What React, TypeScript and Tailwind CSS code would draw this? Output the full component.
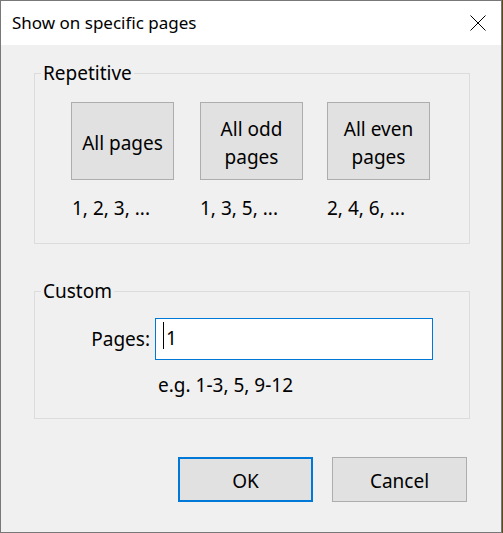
import React from "react";

const font = { fontFamily: '"Noto Sans", "Segoe UI", sans-serif' };

export default function App() {
  return (
    <div className="w-[503px] h-[533px] bg-[#5b4a1e] flex" style={font}>
      <div className="w-[502px] h-[533px] border border-[#787878] flex flex-col bg-[#f0f0f0] text-black">
        {/* Title bar */}
        <div className="h-[44px] bg-white flex items-center justify-between pl-[11px] pr-[15px] shrink-0">
          <span className="text-[17px] leading-[22px]">Show on specific pages</span>
          <svg width="16" height="16" viewBox="0 0 16 16" className="block">
            <path d="M0.5 0.5 L15.5 15.5 M15.5 0.5 L0.5 15.5" stroke="#000" strokeWidth="1" fill="none" />
          </svg>
        </div>

        {/* Body */}
        <div className="flex-1 flex flex-col pl-[33px] text-[19px] leading-[22px]">
          <fieldset className="w-[436px] mt-[17px] border border-[#dcdcdc] pt-[18px] pb-[24px]">
            <legend className="ml-[6px] px-[2px] leading-[22px]">Repetitive</legend>
            <div className="flex pl-[36px]">
              <div className="flex flex-col items-start">
                <div className="w-[103px] h-[78px] pt-[4px] bg-[#e1e1e1] border border-[#adadad] flex items-center justify-center text-center leading-[28px]">
                  All pages
                </div>
                <div className="mt-[17px] pl-[1px]">1, 2, 3, ...</div>
              </div>
              <div className="flex flex-col items-start ml-[26px]">
                <div className="w-[103px] h-[78px] pt-[4px] bg-[#e1e1e1] border border-[#adadad] flex items-center justify-center text-center leading-[28px]">
                  All odd
                  <br />
                  pages
                </div>
                <div className="mt-[17px]">1, 3, 5, ...</div>
              </div>
              <div className="flex flex-col items-start ml-[24px]">
                <div className="w-[103px] h-[78px] pt-[4px] bg-[#e1e1e1] border border-[#adadad] flex items-center justify-center text-center leading-[28px]">
                  All even
                  <br />
                  pages
                </div>
                <div className="mt-[17px]">2, 4, 6, ...</div>
              </div>
            </div>
          </fieldset>

          <fieldset className="w-[436px] mt-[36px] border border-[#dcdcdc] pt-[16px] pb-[22px]">
            <legend className="ml-[6px] px-[2px] leading-[22px]">Custom</legend>
            <div className="flex items-center">
              <div className="w-[115px] text-right">Pages:</div>
              <div className="ml-[5px] w-[278px] h-[42px] bg-white border border-[#0078d7] flex items-center pl-[7px]">
                <span className="w-px h-[27px] bg-black mb-[7px]" />
                <span className="ml-[2px] mb-[3px]">1</span>
              </div>
            </div>
            <div className="mt-[14px] ml-[123px]">e.g. 1-3, 5, 9-12</div>
          </fieldset>

          <div className="flex justify-end gap-[19px] pr-[34px] mt-[38px]">
            <div className="w-[135px] h-[45px] pt-[2px] bg-[#e1e1e1] border-2 border-[#0078d7] flex items-center justify-center">
              OK
            </div>
            <div className="w-[135px] h-[45px] pt-[2px] bg-[#e1e1e1] border border-[#adadad] flex items-center justify-center">
              Cancel
            </div>
          </div>
        </div>
      </div>
    </div>
  );
}
